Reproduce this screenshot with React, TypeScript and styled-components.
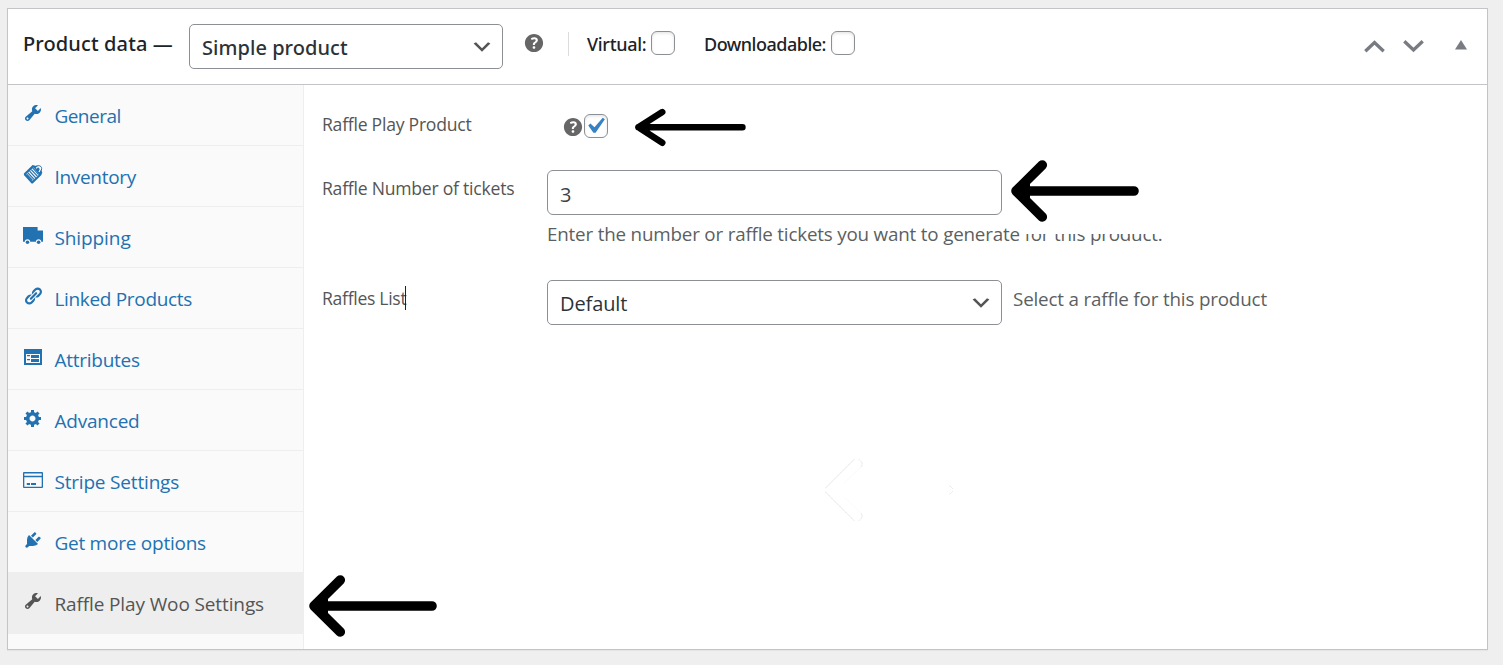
import React from "react";
import styled, { createGlobalStyle } from "styled-components";

const GlobalStyle = createGlobalStyle`
  *, *::before, *::after { box-sizing: border-box; }
  body {
    margin: 0;
    background: #efefef;
    font-family: "Open Sans", "Noto Sans", sans-serif;
    color: #2c3338;
  }
`;

const Page = styled.main`
  height: 665px;
  padding: 8px 15px 15px 7px;
  overflow: hidden;
`;

const Panel = styled.section`
  position: relative;
  display: flex;
  flex-direction: column;
  height: 642px;
  background: #fff;
  border: 1px solid #c3c4c7;
  box-shadow: 0 1px 1px rgba(0, 0, 0, 0.04);
`;

const Header = styled.header`
  display: flex;
  align-items: flex-start;
  height: 76px;
  padding: 15px 15px 0 15px;
  border-bottom: 1px solid #c3c4c7;
`;

const Title = styled.h2`
  width: 166px;
  margin: 5px 0 0;
  font: 500 20px/30px "Noto Sans", sans-serif;
  letter-spacing: 0.12px;
  white-space: nowrap;
  color: #1d2327;
`;

const SelectBox = styled.div<{ $width: number; $medium?: boolean }>`
  display: flex;
  align-items: center;
  justify-content: space-between;
  width: ${(p) => p.$width}px;
  height: 45px;
  padding: 0 8px 0 12px;
  border: 1px solid #8c8f94;
  border-radius: 5px;
  background: #fff;
  font-family: ${(p) => (p.$medium ? '"Noto Sans", sans-serif' : "inherit")};
  font-weight: ${(p) => (p.$medium ? 500 : 400)};
  font-size: 20px;
  letter-spacing: ${(p) => (p.$medium ? 0.05 : -0.1)}px;
  line-height: 43px;
  color: #2c3338;
`;

const SelectValue = styled.span`
  padding-top: 2px;
  line-height: 41px;
`;

const HelpSlot = styled.span`
  display: flex;
  margin: 6px 21px 0 18px;
`;

const TypeOptions = styled.div`
  display: flex;
  align-items: flex-start;
  height: 24px;
  margin-top: 8px;
  padding-left: 18px;
  border-left: 1px solid #dcdcde;
`;

const OptionLabel = styled.label<{ $width: number; $spacing: number }>`
  width: ${(p) => p.$width}px;
  font: 500 18px/24px "Noto Sans", sans-serif;
  letter-spacing: ${(p) => p.$spacing}px;
  white-space: nowrap;
  color: #1d2327;
`;

const Checkbox = styled.span<{ $after?: number }>`
  display: flex;
  align-items: center;
  justify-content: center;
  flex: none;
  width: 24px;
  height: 24px;
  margin: -1px ${(p) => p.$after ?? 0}px 0 0;
  border: 1px solid #8c8f94;
  border-radius: 6px;
  background: #fff;
  box-shadow: inset 0 1.5px 3px rgba(0, 0, 0, 0.1);

  svg {
    flex: none;
    margin-left: -2px;
  }
`;

const OrderControls = styled.div`
  display: flex;
  gap: 18px;
  margin: 15px 0 0 auto;
`;

const Collapse = styled.div`
  display: flex;
  margin: 16px 5px 0 31px;
`;

const Body = styled.div`
  display: flex;
  flex: 1;
  min-height: 0;
`;

const Nav = styled.nav`
  width: 296px;
  background: #fafafa;
  border-right: 1px solid #eee;
`;

const NavItem = styled.a<{ $active?: boolean; $spacing: number }>`
  display: flex;
  align-items: flex-start;
  gap: 11.4px;
  height: 61px;
  padding: 18px 0 0 15px;
  border-bottom: 1px solid #eee;
  background: ${(p) => (p.$active ? "#eee" : "transparent")};
  color: ${(p) => (p.$active ? "#555" : "#2271b1")};
  font-size: 19px;
  line-height: 26px;
  letter-spacing: ${(p) => p.$spacing}px;
  white-space: nowrap;

  svg { flex: none; }
`;

const Fields = styled.div`
  flex: 1;
  padding: 24px 0 0 18px;
  color: #50575e;
`;

const Field = styled.div<{ $height: number }>`
  display: grid;
  grid-template-columns: 225px 1fr;
  align-items: start;
  height: ${(p) => p.$height}px;
`;

const FieldLabel = styled.label<{ $top: number; $spacing: number }>`
  display: flex;
  align-items: center;
  margin-top: ${(p) => p.$top}px;
  font-size: 17.6px;
  line-height: 24px;
  letter-spacing: ${(p) => p.$spacing}px;
  white-space: nowrap;
  color: #555;
`;

const Caret = styled.i`
  width: 1px;
  height: 24px;
  margin-left: -1px;
  background: #222;
`;

const CheckRow = styled.div`
  display: flex;
  align-items: center;
  margin: 5px 0 0 13px;

  > span { margin: -2px 0 0 -2px; }
`;

const NumberInput = styled.div`
  width: 455px;
  height: 45px;
  padding: 1px 12px 0;
  border: 1px solid #8c8f94;
  border-radius: 6px;
  font-size: 20px;
  line-height: 46px;
  letter-spacing: -0.5px;
  color: #3c434a;
`;

const Description = styled.p`
  position: relative;
  width: max-content;
  margin: 6px 0 0;
  font-size: 18.8px;
  letter-spacing: -0.18px;
  line-height: 26px;
  color: #5c5f62;
`;

const Eraser = styled.span`
  position: absolute;
  top: 0;
  right: -4px;
  width: 147px;
  height: 13px;
  background: #fff;
`;

const InlineControls = styled.div`
  display: flex;
  gap: 11px;
`;

const Hint = styled.span`
  margin-top: 6px;
  font-size: 18.8px;
  letter-spacing: -0.16px;
  line-height: 26px;
  color: #5c5f62;
`;

const Marker = styled.svg<{ $x: number; $y: number }>`
  position: absolute;
  left: ${(p) => p.$x}px;
  top: ${(p) => p.$y}px;
  fill: none;
  stroke: #000;
  stroke-linecap: round;
  stroke-linejoin: round;
  pointer-events: none;
`;

const Glyph = ({ size = 20, children }: { size?: number; children: React.ReactNode }) => (
  <svg width={size} height={size} viewBox="0 0 20 20" fill="currentColor" aria-hidden="true">
    {children}
  </svg>
);

const wrench = (
  <path d="M16.68 9.77c-1.34 1.34-3.3 1.67-4.95.99l-5.41 6.52c-.99.99-2.59.99-3.58 0s-.99-2.59 0-3.57l6.52-5.42c-.68-1.65-.35-3.61.99-4.95 1.28-1.28 3.12-1.62 4.72-1.06l-2.89 2.89 2.82 2.82 2.86-2.87c.53 1.58.18 3.39-1.08 4.65zM3.81 16.21c.4.39 1.04.39 1.43 0 .4-.4.4-1.04 0-1.43-.39-.4-1.03-.4-1.43 0-.39.39-.39 1.03 0 1.43z" />
);

const tag = (
  <g>
    <path
      fillRule="evenodd"
      d="M.9 9.4 9.6 1.1 15 2.6 19.3 8.2 18.4 11 9.7 19.5 8.6 19.5 .9 11ZM3.2 10.2 9.2 17 16.2 10.4 10.6 3.6Z"
    />
    <path
      d="M4.9 8.8 11 15.4M6.6 7.2 12.7 13.8M8.3 5.6 14.4 12.2M9.9 4.2 15.8 10.6M3.7 10.3 9.5 16.5"
      stroke="currentColor"
      strokeWidth="1.25"
    />
    <path d="M13.2 4.4C14 3 15 2.6 16 3s1.6 1.3 1.2 2.8L16 8" fill="none" stroke="#fafafa" strokeWidth="1.2" />
    <path d="M12.2 3.1C13 1.8 15 1.2 16.8 1.9s2.2 2 1.6 4.2L17.8 8" fill="none" stroke="currentColor" strokeWidth="1" />
  </g>
);

const truck = (
  <g>
    <path d="M0 2h14.6v3.6H20v11.2H0z" />
    <circle cx="4.5" cy="17" r="2.7" fill="#fafafa" />
    <circle cx="15.6" cy="17" r="2.7" fill="#fafafa" />
    <circle cx="4.5" cy="17.2" r="1.8" />
    <circle cx="15.6" cy="17.2" r="1.8" />
  </g>
);

const link = (
  <path d="M17.74 2.76c1.68 1.69 1.68 4.41 0 6.1l-1.53 1.52c-1.12 1.12-2.7 1.47-4.14 1.09l2.62-2.61.76-.77.76-.76c.84-.84.84-2.2 0-3.04-.84-.85-2.2-.85-3.04 0l-.77.76-3.38 3.38c-.37-1.44-.02-3.02 1.1-4.14l1.52-1.53c1.69-1.68 4.42-1.68 6.1 0zM8.59 13.43l5.34-5.34c.42-.42.42-1.1 0-1.52-.44-.43-1.13-.39-1.53 0l-5.33 5.34c-.42.42-.42 1.1 0 1.52.44.43 1.13.39 1.52 0zm-.76 2.29l4.14-4.15c.38 1.44.03 3.02-1.09 4.14l-1.52 1.53c-1.69 1.68-4.41 1.68-6.1 0-1.68-1.68-1.68-4.42 0-6.1l1.53-1.52c1.12-1.12 2.7-1.47 4.14-1.1l-4.14 4.15c-.85.84-.85 2.2 0 3.05.84.84 2.2.84 3.04 0z" />
);

const card = (
  <path
    fillRule="evenodd"
    d="M1 2h18v16H1zM3 7v9h14V7zM4 8h3v1.2H4zM8 8h8v3H8zM4 12h3v1.2H4zM8 12h8v3H8z"
  />
);

const gear = (
  <path d="M18 12h-2.18c-.17.7-.44 1.35-.81 1.93l1.54 1.54-2.1 2.1-1.54-1.54c-.58.36-1.23.63-1.91.79V19H8v-2.18c-.68-.16-1.33-.43-1.91-.79l-1.54 1.54-2.12-2.12 1.54-1.54c-.36-.58-.63-1.23-.79-1.91H1V9.03h2.17c.16-.7.44-1.35.8-1.94L2.43 5.55l2.1-2.1 1.54 1.54c.58-.37 1.24-.64 1.93-.81V2h3v2.18c.68.16 1.33.43 1.91.79l1.54-1.54 2.12 2.12-1.54 1.54c.36.59.64 1.24.8 1.94H18V12zm-8.5 1.5c1.66 0 3-1.34 3-3s-1.34-3-3-3-3 1.34-3 3 1.34 3 3 3z" />
);

const payment = (
  <path
    fillRule="evenodd"
    d="M1 3h18a1 1 0 0 1 1 1v14a1 1 0 0 1-1 1H1a1 1 0 0 1-1-1V4a1 1 0 0 1 1-1zM1.3 4.6v2.2h17.4V4.6zM1.3 8.3v9.4h17.4V8.3zM3.8 14h3.2v2H3.8zM8 14h5v2H8z"
  />
);

const plug = (
  <path d="M13.11 4.36L9.87 7.6 8 5.73l3.24-3.24c.35-.34 1.05-.2 1.56.32.52.51.66 1.21.31 1.55zm-8 1.77l.91-1.12 9.01 9.01-1.19.84c-.71.71-2.63 1.16-3.82 1.16H6.14L4.9 17.26c-.59.59-1.54.59-2.12 0-.59-.58-.59-1.53 0-2.12l1.24-1.24v-3.88c0-1.13.4-3.19 1.09-3.89zm7.26 3.97l3.24-3.24c.34-.35 1.04-.21 1.55.31.52.51.66 1.21.31 1.55l-3.24 3.25z" />
);

const HelpIcon = () => (
  <svg width="26" height="26" viewBox="0 0 20 20" fill="#666" aria-hidden="true">
    <path d="M17 10c0-3.87-3.14-7-7-7-3.87 0-7 3.13-7 7s3.13 7 7 7c3.86 0 7-3.13 7-7zm-6.3 1.48H9.14v-.43c0-.38.08-.7.24-.98s.46-.57.88-.89c.41-.29.68-.53.81-.71.14-.18.2-.39.2-.62 0-.25-.09-.44-.28-.58-.19-.13-.45-.19-.79-.19-.58 0-1.25.19-2 .57l-.64-1.28c.87-.49 1.8-.74 2.77-.74.81 0 1.45.2 1.92.58.48.39.71.91.71 1.55 0 .43-.09.8-.29 1.11-.19.32-.57.67-1.11 1.06-.38.28-.61.49-.71.63-.1.15-.15.34-.15.57v.35zm-1.47 2.74c-.18-.17-.27-.42-.27-.73 0-.33.08-.58.26-.75s.43-.25.77-.25c.32 0 .57.09.75.26s.27.42.27.74c0 .3-.09.55-.27.72-.18.18-.43.27-.75.27-.33 0-.58-.09-.76-.26z" />
  </svg>
);

const SelectArrow = () => (
  <svg width="24" height="24" viewBox="0 0 20 20" fill="#555" aria-hidden="true">
    <path d="M5 6l5 5 5-5 2 1-7 7-7-7 2-1z" />
  </svg>
);

const CheckMark = () => (
  <svg width="32" height="32" viewBox="0 0 20 20" fill="#3582c4" aria-hidden="true">
    <path d="M14.83 4.89l1.34.94-5.81 8.38H9.02L5.78 9.67l1.34-1.25 2.57 2.4z" />
  </svg>
);

const MoveArrow = ({ down }: { down?: boolean }) => (
  <svg width="21" height="14" viewBox="0 0 21 14" fill="none" stroke="#787c82" strokeWidth="3.3" aria-hidden="true">
    <path d={down ? "M1.3 2.2 10.5 11 19.7 2.2" : "M1.3 12.3 10.5 3.5 19.7 12.3"} />
  </svg>
);

const Arrow = ({ x, y }: { x: number; y: number }) => (
  <Marker $x={x} $y={y} width="128" height="62" viewBox="0 0 128 62" strokeWidth="9.6">
    <path d="M31.3 5 5 31 31.3 57M5 31H123" />
    <path d="M6 31 17 22V40Z" fill="#000" strokeWidth="4" />
  </Marker>
);

const tabs = [
  { label: "General", icon: wrench, spacing: -0.5 },
  { label: "Inventory", icon: tag, spacing: -0.3 },
  { label: "Shipping", icon: truck, spacing: -0.08 },
  { label: "Linked Products", icon: link, spacing: -0.32 },
  { label: "Attributes", icon: card, spacing: -0.25 },
  { label: "Advanced", icon: gear, spacing: -0.2 },
  { label: "Stripe Settings", icon: payment, spacing: -0.18 },
  { label: "Get more options", icon: plug, spacing: -0.24 },
  { label: "Raffle Play Woo Settings", icon: wrench, spacing: -0.12, active: true },
];

export default function App() {
  return (
    <Page>
      <GlobalStyle />
      <Panel>
        <Header>
          <Title>Product data —</Title>
          <SelectBox $width={314} $medium>
            <SelectValue>Simple product</SelectValue>
            <SelectArrow />
          </SelectBox>
          <HelpSlot>
            <HelpIcon />
          </HelpSlot>
          <TypeOptions>
            <OptionLabel $width={64} $spacing={-0.3}>Virtual:</OptionLabel>
            <Checkbox $after={29} />
            <OptionLabel $width={127} $spacing={-0.5}>Downloadable:</OptionLabel>
            <Checkbox />
          </TypeOptions>
          <OrderControls>
            <MoveArrow />
            <MoveArrow down />
          </OrderControls>
          <Collapse>
            <svg width="12" height="10" viewBox="0 0 12 10" fill="#787c82" aria-hidden="true">
              <path d="M6 0 12 9.5H0Z" />
            </svg>
          </Collapse>
        </Header>
        <Body>
          <Nav>
            {tabs.map((t) => (
              <NavItem key={t.label} $active={t.active} $spacing={t.spacing}>
                <Glyph>{t.icon}</Glyph>
                {t.label}
              </NavItem>
            ))}
          </Nav>
          <Fields>
            <Field $height={61}>
              <FieldLabel $top={3} $spacing={-0.25}>Raffle Play Product</FieldLabel>
              <CheckRow>
                <HelpIcon />
                <Checkbox>
                  <CheckMark />
                </Checkbox>
              </CheckRow>
            </Field>
            <Field $height={110}>
              <FieldLabel $top={6} $spacing={-0.24}>Raffle Number of tickets</FieldLabel>
              <div>
                <NumberInput>3</NumberInput>
                <Description>
                  Enter the number or raffle tickets you want to generate for this product.
                  <Eraser />
                </Description>
              </div>
            </Field>
            <Field $height={45}>
              <FieldLabel $top={6} $spacing={-0.3}>
                Raffles List
                <Caret />
              </FieldLabel>
              <InlineControls>
                <SelectBox $width={455}>
                  <SelectValue>Default</SelectValue>
                  <SelectArrow />
                </SelectBox>
                <Hint>Select a raffle for this product</Hint>
              </InlineControls>
            </Field>
          </Fields>
        </Body>

        <Marker $x={626} $y={99} width="113" height="39" viewBox="0 0 113 39" strokeWidth="6.4">
          <path d="M28.3 4 4.4 19.3 28.3 34.8M4.4 19.3H108.5" />
          <path d="M4.5 19.3 14 13.8V24.8Z" fill="#000" strokeWidth="3" />
        </Marker>
        <Arrow x={1003} y={151} />
        <Arrow x={301} y={566} />
        <Marker $x={817} $y={450} width="130" height="62" viewBox="0 0 130 62" strokeWidth="1">
          <path d="M29 .5 .5 29M.5 33 29 61.5" stroke="#e2e2e2" strokeDasharray="1 1.2" />
          <path d="M34 .5Q39 4 36 8M34 61.5Q39 58 36 54M125 27l2.5 2.5M125 35l2.5-2.5" stroke="#e4e4e4" strokeDasharray="1 1.4" />
          <path d="M36 8 19 24M36 54 19 38" stroke="#fafafa" />
        </Marker>
      </Panel>
    </Page>
  );
}
